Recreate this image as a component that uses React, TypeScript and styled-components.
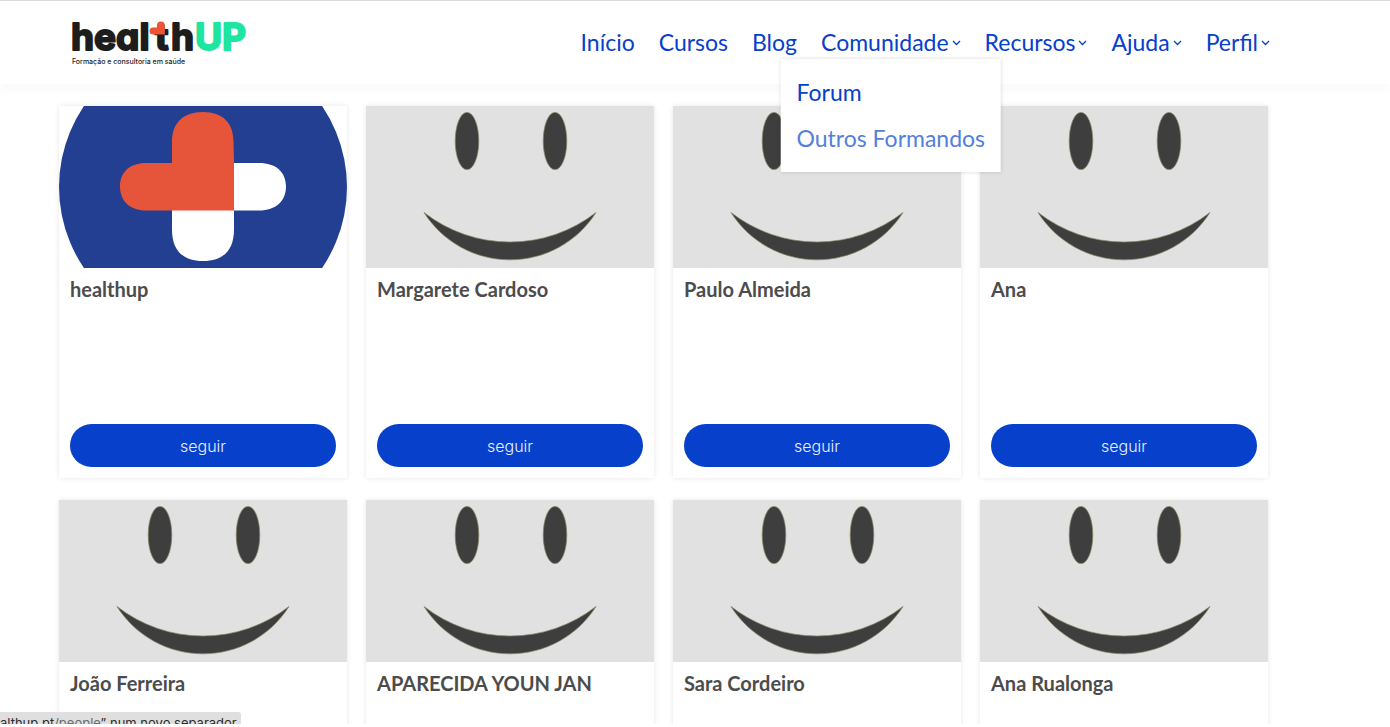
import React from "react";
import styled, { createGlobalStyle } from "styled-components";

const GlobalStyle = createGlobalStyle`
  *, *::before, *::after { box-sizing: border-box; }
  body { margin: 0; background: #fff; font-family: Lato, "Open Sans", sans-serif; }
`;

const Page = styled.div`
  position: relative;
  display: flex;
  flex-direction: column;
  height: 100vh;
  border-bottom: 3px solid #fff;
  overflow: hidden;
`;

const Header = styled.header`
  position: relative;
  z-index: 2;
  flex: none;
  display: flex;
  align-items: center;
  justify-content: space-between;
  height: 84px;
  padding: 0 120px 2px 68px;
  background: #fff;
  border-top: 1px solid #dcdcdc;
  box-shadow: 0 8px 8px rgba(0, 0, 0, 0.02);
`;

const LogoLink = styled.a`
  display: block;
  svg { display: block; overflow: visible; }
`;

const NavList = styled.ul`
  display: flex;
  gap: 24px;
  margin: 0;
  padding: 0;
  list-style: none;
`;

const NavItem = styled.li`
  position: relative;
`;

const NavLink = styled.a<{ $hovered?: boolean }>`
  display: flex;
  align-items: center;
  gap: 3px;
  color: ${(p) => (p.$hovered ? "#5280dc" : "#0640cb")};
  font-size: 23px;
  line-height: 34px;
  text-decoration: none;
  white-space: nowrap;
  svg { margin-top: 3px; }
`;

const Submenu = styled.ul`
  position: absolute;
  top: 34px;
  left: 50%;
  transform: translateX(-50%);
  display: grid;
  gap: 12px;
  margin: 0;
  padding: 16px 16px 17px;
  list-style: none;
  background: #fff;
  box-shadow: 0 0 4px rgba(0, 0, 0, 0.15);
`;

const Content = styled.main`
  flex: 1;
  min-height: 0;
  padding: 22px 122px 0 59px;
`;

const PeopleGrid = styled.ul`
  display: grid;
  grid-template-columns: repeat(4, minmax(0, 1fr));
  gap: 22px 19px;
  margin: 0;
  padding: 0;
  list-style: none;
`;

const Card = styled.li`
  display: flex;
  flex-direction: column;
  min-height: 372px;
  background: #fff;
  box-shadow: 0 0 5px rgba(0, 0, 0, 0.1);
`;

const Cover = styled.svg<{ $tone: string }>`
  display: block;
  width: 100%;
  height: 162px;
  background: ${(p) => p.$tone};
`;

const CardBody = styled.div`
  flex: 1;
  display: flex;
  flex-direction: column;
  justify-content: space-between;
  padding: 7px 11px 11px;
`;

const Name = styled.h2`
  margin: 0;
  color: #4c4c4c;
  font-size: 20px;
  font-weight: 700;
  line-height: 28px;
`;

const FollowButton = styled.button`
  height: 43px;
  padding: 0 6px;
  border: 0;
  border-radius: 22px;
  background: #0640cb;
  color: #e9effc;
  font-family: Inter, sans-serif;
  font-size: 16px;
  font-weight: 300;
  cursor: pointer;
`;

const StatusBar = styled.div`
  position: absolute;
  z-index: 3;
  left: 0;
  bottom: 0;
  height: 12px;
  padding: 0 4px 0 0;
  overflow: hidden;
  border-top-right-radius: 3px;
  background: #dfdfdf;
  color: #2c2c2c;
  font-family: Inter, sans-serif;
  font-size: 13px;
  line-height: 22px;
  white-space: nowrap;
`;

const StatusPath = styled.span`
  color: #6b6b6b;
`;

const LogoText = styled.text`
  font-family: Inter, sans-serif;
  font-size: 37px;
  font-weight: 700;
  font-feature-settings: "cv11";
  stroke-width: 2px;
  stroke-linejoin: round;
`;

const Logo = () => (
  <svg width="184" height="50" viewBox="68 16 184 50" role="img" aria-label="healthUP">
    <g fill="#1d1d1b" stroke="#1d1d1b">
      <LogoText x="71" y="49">heal</LogoText>
      <LogoText x="155" y="49">t</LogoText>
      <LogoText x="171" y="49">h</LogoText>
    </g>
    <LogoText x="195" y="49" fill="#1ee6a0" stroke="#1ee6a0">UP</LogoText>
    <path
      d="M157 26.500V24.500a3.900 3.900 0 0 1 7.800 0V33.500H153a3.500 3.500 0 0 1 0-7Z"
      fill="#ee5338"
    />
    <text x="72" y="63" fontFamily="Inter, sans-serif" fontSize="7" fontWeight="500" fill="#1d1d1b">
      Formação e consultoria em saúde
    </text>
  </svg>
);

const Chevron = () => (
  <svg width="9" height="6" viewBox="0 0 9 6" fill="none" stroke="currentColor" strokeWidth="1.3" aria-hidden="true">
    <path d="M1 1l3.5 3.5L8 1" />
  </svg>
);

const SmileyCover = () => (
  <Cover $tone="#e1e1e1" viewBox="0 0 288 162" preserveAspectRatio="xMidYMid slice" aria-hidden="true">
    <g fill="#3e3e3e" stroke="#8a8462" strokeWidth="0.7">
      <ellipse cx="101" cy="35" rx="11.8" ry="28.6" />
      <ellipse cx="189" cy="35" rx="11.8" ry="28.6" />
      <path d="M58 106.5A140 140 0 0 0 230 106.5A101.8 101.8 0 0 1 58 106.5Z" />
    </g>
  </Cover>
);

const BrandCover = () => (
  <Cover $tone="#fff" viewBox="0 0 288 162" preserveAspectRatio="xMidYMid slice" aria-hidden="true">
    <circle cx="144" cy="81" r="144" fill="#233f92" />
    <path
      d="M175 57h25c17 0 27 9 27 23.5S217 104.500 200 104.500h-25v19c0 20-10 31.500-31 31.500s-31-11.500-31-31.500v-19Z"
      fill="#fff"
    />
    <path
      d="M113 57V36C113 17 124 6 144 6s30.500 11 30.500 30l.5 21v47.500H87C71 104.500 61 95 61 80.500S71 57 87 57Z"
      fill="#e65539"
    />
  </Cover>
);

const links = [
  { label: "Início" },
  { label: "Cursos" },
  { label: "Blog" },
  { label: "Comunidade", menu: true, items: ["Forum", "Outros Formandos"] },
  { label: "Recursos", menu: true },
  { label: "Ajuda", menu: true },
  { label: "Perfil", menu: true },
];

const people = [
  { name: "healthup", brand: true },
  { name: "Margarete Cardoso" },
  { name: "Paulo Almeida" },
  { name: "Ana" },
  { name: "João Ferreira" },
  { name: "APARECIDA YOUN JAN" },
  { name: "Sara Cordeiro" },
  { name: "Ana Rualonga" },
];

export default function App() {
  return (
    <Page>
      <GlobalStyle />
      <Header>
        <LogoLink href="#">
          <Logo />
        </LogoLink>
        <nav>
          <NavList>
            {links.map((link) => (
              <NavItem key={link.label}>
                <NavLink href="#">
                  {link.label}
                  {link.menu && <Chevron />}
                </NavLink>
                {link.items && (
                  <Submenu>
                    {link.items.map((item, i) => (
                      <li key={item}>
                        <NavLink href="#" $hovered={i === 1}>{item}</NavLink>
                      </li>
                    ))}
                  </Submenu>
                )}
              </NavItem>
            ))}
          </NavList>
        </nav>
      </Header>
      <Content>
        <PeopleGrid>
          {people.map((person) => (
            <Card key={person.name}>
              {person.brand ? <BrandCover /> : <SmileyCover />}
              <CardBody>
                <Name>{person.name}</Name>
                <FollowButton type="button">seguir</FollowButton>
              </CardBody>
            </Card>
          ))}
        </PeopleGrid>
      </Content>
      <StatusBar>
        althup.pt<StatusPath>/people</StatusPath>” num novo separador
      </StatusBar>
    </Page>
  );
}
